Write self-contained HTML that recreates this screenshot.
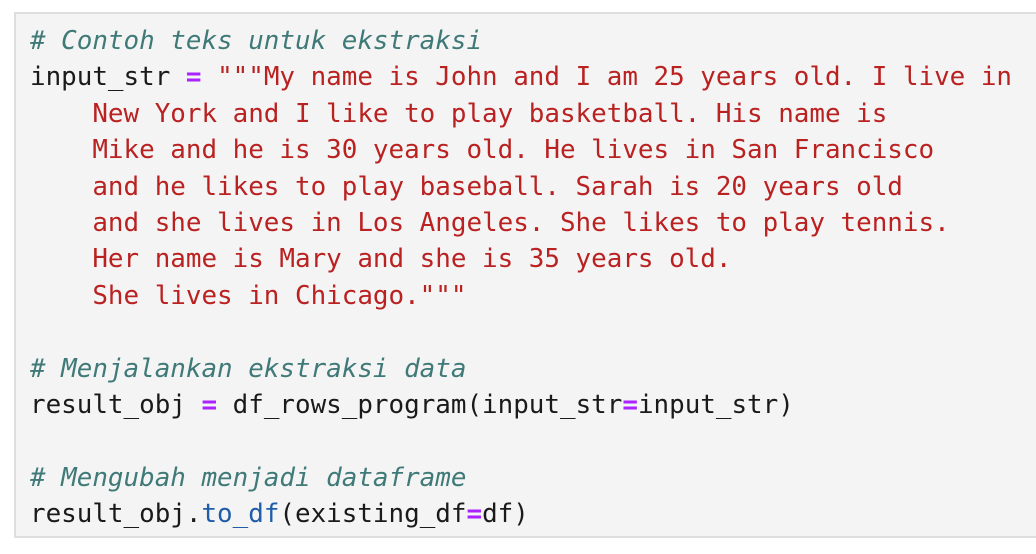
<!DOCTYPE html>
<html><head><meta charset="utf-8"><style>
html,body{margin:0;padding:0;background:#fff;width:1036px;height:554px;overflow:hidden}
.box{position:absolute;left:14px;top:12px;width:1040px;height:526px;background:#f4f4f4;border:2px solid #dedede;box-sizing:border-box}
pre{position:absolute;left:30px;top:23px;margin:0;font-family:"DejaVu Sans Mono","Liberation Mono",monospace;font-size:25.9px;line-height:36.4px;color:#1a1a1a;white-space:pre}
.c{color:#3f7a78;font-style:italic}.s{color:#ba2121}.o{color:#aa22ff;font-weight:bold}.f{color:#1f5da8}
</style></head><body><div class="box"></div><pre><span class="c"># Contoh teks untuk ekstraksi</span>
input_str <span class="o">=</span> <span class="s">"""My name is John and I am 25 years old. I live in
    New York and I like to play basketball. His name is
    Mike and he is 30 years old. He lives in San Francisco
    and he likes to play baseball. Sarah is 20 years old
    and she lives in Los Angeles. She likes to play tennis.
    Her name is Mary and she is 35 years old.
    She lives in Chicago."""</span>

<span class="c"># Menjalankan ekstraksi data</span>
result_obj <span class="o">=</span> df_rows_program(input_str<span class="o">=</span>input_str)

<span class="c"># Mengubah menjadi dataframe</span>
result_obj.<span class="f">to_df</span>(existing_df<span class="o">=</span>df)</pre></body></html>
